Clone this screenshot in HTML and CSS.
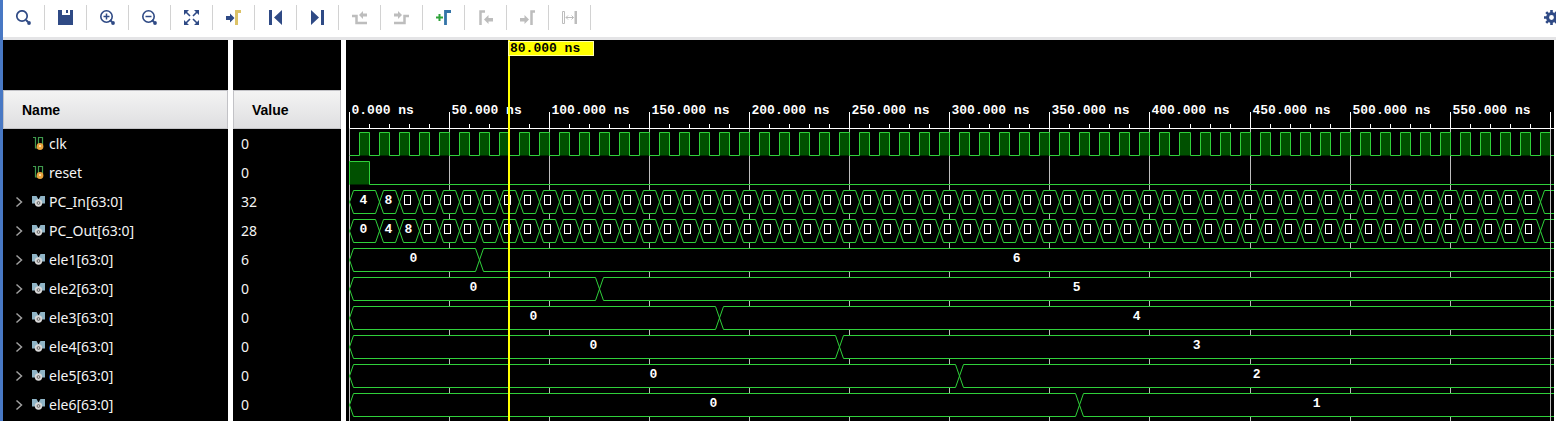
FILE: index.html
```html
<!DOCTYPE html>
<html lang="en">
<head>
<meta charset="utf-8">
<title>Waveform</title>
<link rel="stylesheet" href="styles.css">
</head>
<body>
<svg class="defs" width="0" height="0" aria-hidden="true">
  <symbol id="i-scalar" viewBox="0 0 13 14">
    <path d="M1 .500h2.500V11H7M6.500 8V.500h4V8" fill="none" stroke="#3f9a4d" stroke-width="1.200"/>
    <circle cx="8" cy="9.500" r="3.400" fill="#e8a33d"/><circle cx="8" cy="9" r="1" fill="#fff0c8"/>
  </symbol>
  <symbol id="i-bus" viewBox="0 0 13 14">
    <path d="M0 1h4.500l2 3.500 2-3.500H13v7.500H0z" fill="#8fb4c6"/>
    <circle cx="6.500" cy="8" r="3.700" fill="#d8d8d8"/><circle cx="6.500" cy="8" r="1.400" fill="#d8d8d8" stroke="#666"/>
  </symbol>
  <symbol id="i-chev" viewBox="0 0 8 12"><path d="M1.500 1.500l5 4.500-5 4.500" fill="none" stroke="#a0a0a0" stroke-width="1.500"/></symbol>
</svg>
<div class="app">
  <div class="toolbar" role="toolbar">
    <button aria-label="Search"><svg viewBox="0 0 15 15"><g fill="none" stroke="currentColor"><circle cx="6" cy="6" r="5.200" stroke-width="1.700"/><path d="M10 10l2 2" stroke-width="2"/></g><circle cx="13" cy="13" r="1.900" fill="currentColor"/></svg></button>
    <button aria-label="Save"><svg viewBox="0 0 15 15"><path d="M0 0h4v5h8V0h3v15H0z" fill="currentColor"/><path d="M8 0h2v3H8z" fill="currentColor"/></svg></button>
    <button aria-label="Zoom in"><svg viewBox="0 0 15 15"><g fill="none" stroke="currentColor"><circle cx="6.500" cy="6.500" r="5.700" stroke-width="1.600"/><path d="M10 10l2 2" stroke-width="2"/><path d="M3.500 6.500h6M6.500 3.500v6" stroke-width="1.500"/></g><circle cx="13" cy="13" r="1.900" fill="currentColor"/></svg></button>
    <button aria-label="Zoom out"><svg viewBox="0 0 15 15"><g fill="none" stroke="currentColor"><circle cx="6.500" cy="6.500" r="5.700" stroke-width="1.600"/><path d="M10 10l2 2" stroke-width="2"/><path d="M3.500 6.500h6" stroke-width="1.500"/></g><circle cx="13" cy="13" r="1.900" fill="currentColor"/></svg></button>
    <button aria-label="Zoom fit"><svg viewBox="0 0 15 15"><path d="M0 0h5L0 5zM15 0v5l-5-5zM0 15v-5l5 5zM15 15h-5l5-5z" fill="currentColor"/><path d="M1 1l5 5M14 1L9 6M1 14l5-5M14 14L9 9" stroke="currentColor" stroke-width="1.600"/></svg></button>
    <button aria-label="Zoom to cursor"><svg viewBox="0 0 15 15"><path d="M0 6h4V3.500l4.500 4.500L4 12.500V10H0z" fill="currentColor"/><path d="M10.500 15V1.500H15" fill="none" stroke="#dcc266" stroke-width="3"/></svg></button>
    <button aria-label="Go to time 0"><svg viewBox="0 0 15 15"><path d="M1 0h3v15H1zM14 0v15L6 7.500z" fill="currentColor"/></svg></button>
    <button aria-label="Go to last time"><svg viewBox="0 0 15 15"><path d="M11 0h3v15h-3zM1 0v15l8-7.500z" fill="currentColor"/></svg></button>
    <button aria-label="Previous transition" disabled><svg viewBox="0 0 15 15"><path d="M0 6h4.500v7H15" fill="none" stroke="currentColor" stroke-width="2.500"/><path d="M7 5l4-4v2.500h4v3h-4V9z" fill="currentColor"/></svg></button>
    <button aria-label="Next transition" disabled><svg viewBox="0 0 15 15"><path d="M0 13h10.500V6H15" fill="none" stroke="currentColor" stroke-width="2.500"/><path d="M8 5L4 1v2.500H0v3h4V9z" fill="currentColor"/></svg></button>
    <button aria-label="Add marker"><svg viewBox="0 0 15 15"><path d="M0 7.500h7M3.500 4v7" stroke="#2fa33a" stroke-width="2"/><path d="M9.500 15V1.500H15" fill="none" stroke="#3474a8" stroke-width="2.800"/></svg></button>
    <button aria-label="Previous marker" disabled><svg viewBox="0 0 15 15"><path d="M2.500 15V1.500H7" fill="none" stroke="currentColor" stroke-width="2.500"/><path d="M6 9.500L10.500 5v3H15v3.500h-4.500V14z" fill="currentColor"/></svg></button>
    <button aria-label="Next marker" disabled><svg viewBox="0 0 15 15"><path d="M11.500 15V1.500H15" fill="none" stroke="currentColor" stroke-width="2.500"/><path d="M9 9.500L4.500 5v3H0v3.500h4.500V14z" fill="currentColor"/></svg></button>
    <button aria-label="Swap cursors" disabled><svg viewBox="0 0 15 15"><path d="M.500 1.500h2v12h-2zM4 7.500h7.500M6 5.500l-2 2 2 2M9.500 5.500l2 2-2 2" fill="none" stroke="currentColor"/><path d="M12.500 1H15v13h-2.500z" fill="currentColor"/></svg></button>
    <button class="settings" aria-label="Settings"><svg viewBox="0 0 15 15"><circle cx="7.500" cy="7.500" r="3.900" fill="none" stroke="currentColor" stroke-width="3"/><path d="M7.500 0v3M7.500 12v3M0 7.500h3M12 7.500h3M2.200 2.200l2 2M10.800 10.800l2 2M2.200 12.800l2-2M10.800 4.200l2-2" stroke="currentColor" stroke-width="2.600"/></svg></button>
  </div>
  <div class="work">
    <table class="signals">
      <thead>
        <tr class="blank"><td></td><td></td></tr>
        <tr class="head"><th class="name" scope="col">Name</th><th class="value" scope="col">Value</th></tr>
      </thead>
      <tbody id="signals"></tbody>
    </table>
    <div class="wave"><svg id="wave" class="canvas" role="img" aria-label="Signal waveforms"></svg></div>
  </div>
</div>
<script src="wave.js"></script>
</body>
</html>
```
FILE: styles.css
```css
* { box-sizing: border-box; }
body { margin: 0; background: #fff; font: 14px/20px "Noto Sans", sans-serif; }
.defs { position: absolute; }
.app { display: flex; flex-direction: column; height: 100vh; border-left: 3px solid #4878c4; overflow: hidden; }
.toolbar { display: flex; flex: none; align-items: center; padding: 5px 0 7px; border-bottom: 3px solid #e4e4e6; }
.toolbar button { display: flex; flex: none; align-items: center; justify-content: center; width: 42px; height: 25px; padding: 0; border: 0; border-right: 1px solid #d2d2d2; background: none; color: #2f4a85; }
.toolbar button:disabled { color: #bdbdbd; }
.toolbar svg { width: 15px; height: 15px; }
.toolbar .settings { width: 12px; margin-left: auto; border: 0; justify-content: flex-start; }
.toolbar .settings svg { flex: none; }
.work { display: flex; flex: 1; min-height: 0; overflow: hidden; }
.signals { flex: none; align-self: flex-start; width: 343px; table-layout: fixed; border-collapse: separate; border-spacing: 0; background: #000; color: #f4f4f4; }
.signals td, .signals th { height: 29px; padding: 0 8px; border-right: 5px solid #fff; text-align: left; white-space: nowrap; }
.signals td:first-child, .signals th:first-child { width: 230px; }
.signals .blank td { height: 50px; }
.signals .head th { height: 39px; padding: 0 19px; background: linear-gradient(#f4f4f4, #dedee0); color: #000; background-clip: padding-box; box-shadow: inset 0 0 0 1px #c2c2c6; font: bold 14px/20px "Liberation Sans", Arial, sans-serif; }
.cell { display: flex; align-items: center; height: 29px; padding-left: 4px; }
.expand { display: flex; width: 17px; height: 20px; padding: 0; border: 0; background: none; align-items: center; }
.expand svg { width: 8px; height: 12px; }
.kind { width: 13px; height: 14px; margin-right: 4px; }
.wave { flex: 1; min-width: 0; margin-right: 2px; background: #000; overflow: hidden; }
.canvas { display: block; width: 100%; height: 100%; overflow: hidden; }
.canvas text { font: bold 13px "Liberation Mono", monospace; fill: #fff; }
.canvas .mid { text-anchor: middle; }
.canvas .grid { stroke: #bdbdbd; }
.canvas .axis { stroke: #fff; fill: none; }
.canvas .sig { stroke: #2fd03a; fill: none; }
.canvas .high { fill: #005000; }
.canvas .bus { stroke: #2fd03a; fill: #000; }
.canvas .box { stroke: #fff; fill: none; }
.canvas .cursor { fill: #ff0; }
.canvas .flag { fill: #ff0; stroke: #ffffa8; }
.canvas .flagtext { fill: #000; }
```
FILE: wave.js
```js
const signals = [
  { name: "clk", value: "0", clock: 10 },
  { name: "reset", value: "0", pulse: 10 },
  { name: "PC_In[63:0]", value: "32", edges: [0, 15, 25], labels: ["4", "8"], repeat: 10 },
  { name: "PC_Out[63:0]", value: "28", edges: [0, 15, 25, 35], labels: ["0", "4", "8"], repeat: 10 },
  { name: "ele1[63:0]", value: "6", edges: [0, 65], labels: ["0", "6"] },
  { name: "ele2[63:0]", value: "0", edges: [0, 125], labels: ["0", "5"] },
  { name: "ele3[63:0]", value: "0", edges: [0, 185], labels: ["0", "4"] },
  { name: "ele4[63:0]", value: "0", edges: [0, 245], labels: ["0", "3"] },
  { name: "ele5[63:0]", value: "0", edges: [0, 305], labels: ["0", "2"] },
  { name: "ele6[63:0]", value: "0", edges: [0, 365], labels: ["0", "1"] }
];

const icon = (id, cls) => `<svg class="${cls}" aria-hidden="true"><use href="#${id}"/></svg>`;

document.getElementById("signals").innerHTML = signals.map(s => {
  const bus = Boolean(s.edges);
  const toggle = bus
    ? `<button class="expand" aria-label="Expand ${s.name}">${icon("i-chev", "")}</button>`
    : `<span class="expand"></span>`;
  return `<tr><td><div class="cell">${toggle}${icon(bus ? "i-bus" : "i-scalar", "kind")}${s.name}</div></td><td>${s.value}</td></tr>`;
}).join("") + "<tr><td></td><td></td></tr>";

const ORIGIN = 3, SCALE = 2.0012, AXIS = 88, ROW = 29, SWING = 23, SLOPE = 4, LABEL_WIDTH = 80;
const X = ns => Math.round(ORIGIN + ns * SCALE) + 0.5;

function drawBus(s, top, width) {
  const edges = s.edges.slice();
  if (s.repeat) while (X(edges[edges.length - 1]) < width) edges.push(edges[edges.length - 1] + s.repeat);
  let out = "";
  edges.forEach((t, i) => {
    const a = X(t);
    if (a >= width) return;
    const last = i === edges.length - 1;
    const b = last ? width + 20 : X(edges[i + 1]);
    const mid = top + SWING / 2, bottom = top + SWING;
    out += `<path class="bus" d="M${a} ${mid}L${a + SLOPE} ${top}H${b - SLOPE}L${b} ${mid}L${b - SLOPE} ${bottom}H${a + SLOPE}Z"/>`;
    const center = (a + b - (last ? 20 : 2)) / 2;
    if (s.labels[i]) out += `<text class="mid" x="${center}" y="${top + 13}">${s.labels[i]}</text>`;
    else if (b <= width) out += `<rect class="box" x="${a + 5}" y="${top + 5}" width="6" height="9"/>`;
  });
  return out;
}

function draw() {
  const svg = document.getElementById("wave");
  const { width, height } = svg.getBoundingClientRect();
  let out = "", ticks = `M${X(0)} ${AXIS + 0.5}H${width}`, labels = "", lastMajor = 0;
  for (let t = 0; X(t) < width; t += 10) {
    const major = t % 50 === 0;
    ticks += `M${X(t)} ${AXIS}v${major ? -16 : -4}`;
    if (major) {
      lastMajor = t;
      out += `<path class="grid" d="M${X(t)} ${AXIS}V${height}"/>`;
      if (X(t) + LABEL_WIDTH < width) labels += `<text x="${X(t) + 2}" y="74">${t}.000 ns</text>`;
    }
  }
  signals.forEach((s, i) => {
    const top = AXIS + 4.5 + i * ROW, low = top + SWING;
    if (s.clock) {
      let d = `M${X(0)} ${low}`;
      for (let t = s.clock / 2; X(t) < width; t += s.clock) {
        const a = X(t), b = X(t + s.clock / 2);
        out += `<rect class="high" x="${a}" y="${top}" width="${b - a}" height="${SWING}"/>`;
        d += `H${a}V${top}H${b}V${low}`;
      }
      out += `<path class="sig" d="${d}H${width}"/>`;
    } else if (s.pulse) {
      out += `<rect class="high" x="${X(0)}" y="${top}" width="${X(s.pulse) - X(0)}" height="${SWING}"/>`;
      out += `<path class="sig" d="M${X(0)} ${low}V${top}H${X(s.pulse)}V${low}H${width}"/>`;
    } else out += drawBus(s, top, width);
  });
  out += `<path class="grid" d="M${X(lastMajor)} ${AXIS}V${height}"/><path class="axis" d="${ticks}"/>${labels}`;
  const c = X(80) - 1.5;
  out += `<rect class="cursor" x="${c}" y="0" width="2" height="${height}"/>`;
  out += `<rect class="flag" x="${c + 0.5}" y="1.500" width="85" height="14"/><text class="flagtext" x="${c + 2}" y="12">80.000 ns</text>`;
  svg.innerHTML = out;
}
draw();
window.addEventListener("resize", draw);
```
